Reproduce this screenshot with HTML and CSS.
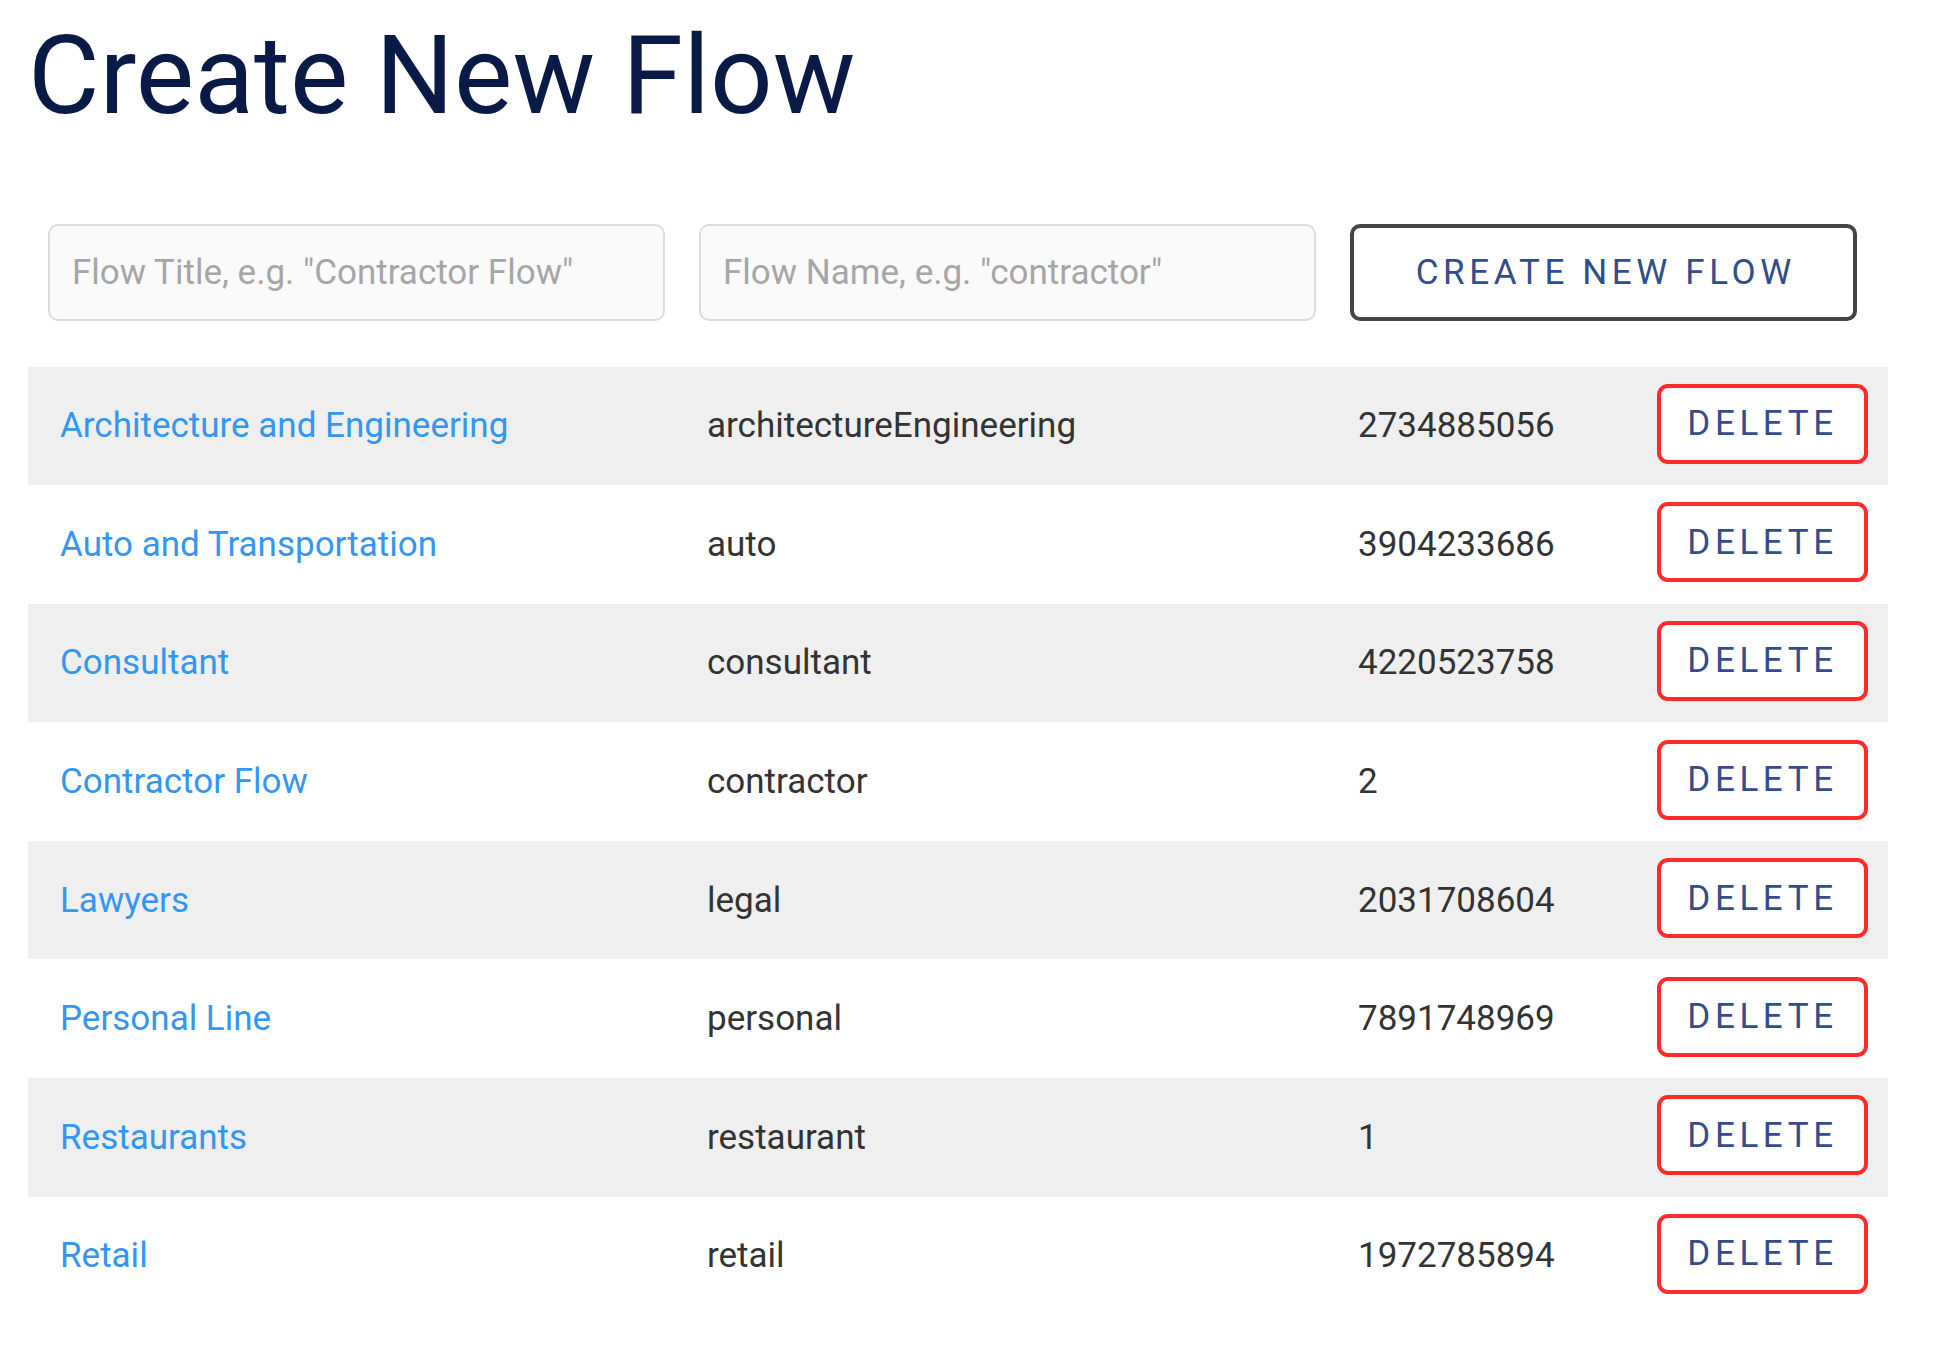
FILE: index.html
```html
<!DOCTYPE html>
<html lang="en">
<head>
<meta charset="utf-8">
<title>Create New Flow</title>
<link rel="stylesheet" href="styles.css">
</head>
<body>
<main class="page">
  <h1 class="title">Create New Flow</h1>
  <form class="new-flow">
    <input class="field" type="text" placeholder="Flow Title, e.g. &quot;Contractor Flow&quot;">
    <input class="field" type="text" placeholder="Flow Name, e.g. &quot;contractor&quot;">
    <button class="btn btn-create" type="button">Create New Flow</button>
  </form>
  <div class="flows">
    <div class="flow-row"><a class="cell link" href="#">Architecture and Engineering</a><span class="cell">architectureEngineering</span><span class="cell">2734885056</span><span class="cell action"><button class="btn btn-delete" type="button">Delete</button></span></div>
    <div class="flow-row"><a class="cell link" href="#">Auto and Transportation</a><span class="cell">auto</span><span class="cell">3904233686</span><span class="cell action"><button class="btn btn-delete" type="button">Delete</button></span></div>
    <div class="flow-row"><a class="cell link" href="#">Consultant</a><span class="cell">consultant</span><span class="cell">4220523758</span><span class="cell action"><button class="btn btn-delete" type="button">Delete</button></span></div>
    <div class="flow-row"><a class="cell link" href="#">Contractor Flow</a><span class="cell">contractor</span><span class="cell">2</span><span class="cell action"><button class="btn btn-delete" type="button">Delete</button></span></div>
    <div class="flow-row"><a class="cell link" href="#">Lawyers</a><span class="cell">legal</span><span class="cell">2031708604</span><span class="cell action"><button class="btn btn-delete" type="button">Delete</button></span></div>
    <div class="flow-row"><a class="cell link" href="#">Personal Line</a><span class="cell">personal</span><span class="cell">7891748969</span><span class="cell action"><button class="btn btn-delete" type="button">Delete</button></span></div>
    <div class="flow-row"><a class="cell link" href="#">Restaurants</a><span class="cell">restaurant</span><span class="cell">1</span><span class="cell action"><button class="btn btn-delete" type="button">Delete</button></span></div>
    <div class="flow-row"><a class="cell link" href="#">Retail</a><span class="cell">retail</span><span class="cell">1972785894</span><span class="cell action"><button class="btn btn-delete" type="button">Delete</button></span></div>
  </div>
</main>
</body>
</html>
```

FILE: styles.css
```css
* {
  box-sizing: border-box;
}

html, body {
  margin: 0;
  padding: 0;
  background: #ffffff;
}

body {
  font-family: Roboto, "Noto Sans", "Liberation Sans", sans-serif;
  font-size: 35px;
  color: #333333;
}

.page {
  width: 1860px;
  margin-left: 28px;
  padding-top: 10.5px;
}

.title {
  margin: 0;
  font-size: 110px;
  font-weight: 400;
  line-height: normal;
  color: #0a1a46;
}

.new-flow {
  display: grid;
  grid-template-columns: 617px 617px 507px;
  column-gap: 34px;
  margin: 84px 0 0 20px;
  height: 97px;
}

.field {
  height: 97px;
  border: 2px solid #dcdcdc;
  border-radius: 10px;
  background: #fafafa;
  padding: 0 0 0 22px;
  font-family: inherit;
  font-size: 35px;
  color: #333333;
  outline: none;
}

.field::placeholder {
  color: #a6a6a6;
  opacity: 1;
}

.btn {
  font-family: inherit;
  font-size: 35px;
  text-transform: uppercase;
  letter-spacing: 4.6px;
  color: #334d8c;
  background: #ffffff;
  cursor: pointer;
  padding: 0 0 0 4.6px;
}

.btn-create {
  height: 97px;
  border: 4px solid #444444;
  border-radius: 10px;
}

.flows {
  margin-top: 46px;
  display: flex;
  flex-direction: column;
}

.flow-row {
  display: grid;
  grid-template-columns: 647px 651px 299px 263px;
  align-items: center;
  height: 118.6px;
}

.flow-row:nth-child(odd) {
  background: #efefef;
}

.cell {
  padding-left: 32px;
  white-space: nowrap;
}

.link {
  color: #3397f0;
  text-decoration: none;
}

.action {
  display: flex;
  align-items: center;
  padding-right: 20px;
}

.btn-delete {
  width: 211px;
  height: 80px;
  border: 4px solid #ff2b2b;
  border-radius: 11px;
  margin-bottom: 4px;
  padding-left: 0;
}
```
